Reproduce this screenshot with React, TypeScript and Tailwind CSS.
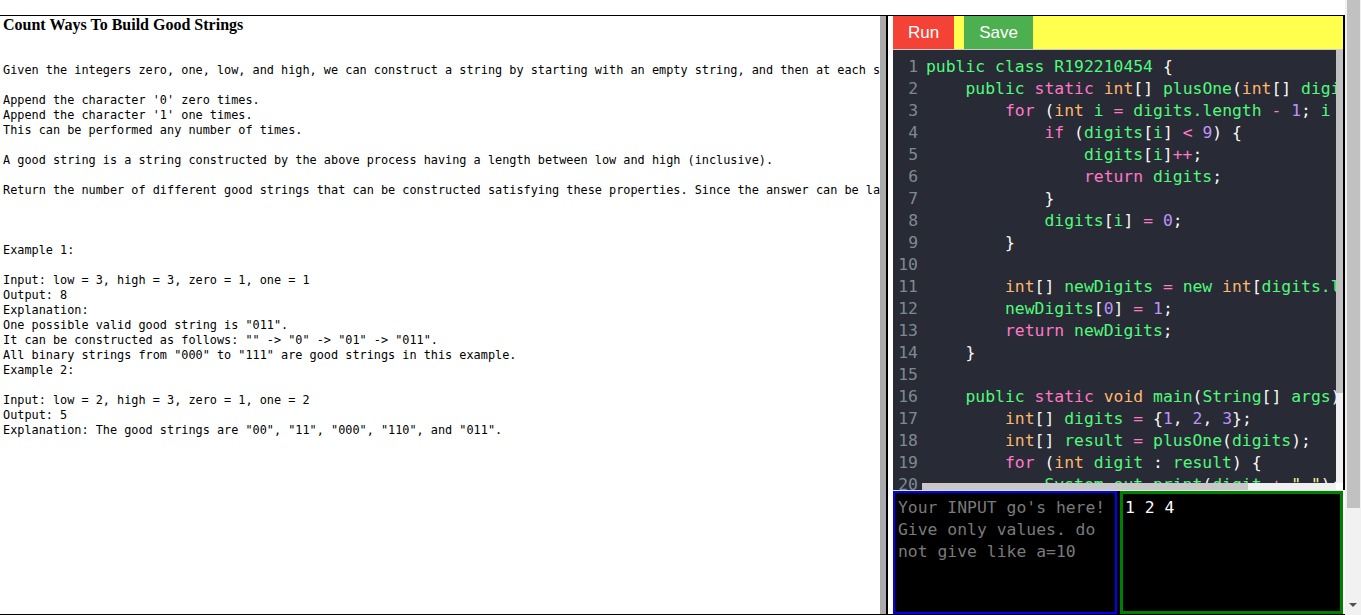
const problemText = `Given the integers zero, one, low, and high, we can construct a string by starting with an empty string, and then at each step perform either of the following:

Append the character '0' zero times.
Append the character '1' one times.
This can be performed any number of times.

A good string is a string constructed by the above process having a length between low and high (inclusive).

Return the number of different good strings that can be constructed satisfying these properties. Since the answer can be large, return it modulo 10^9 + 7.



Example 1:

Input: low = 3, high = 3, zero = 1, one = 1
Output: 8
Explanation: 
One possible valid good string is "011". 
It can be constructed as follows: "" -> "0" -> "01" -> "011". 
All binary strings from "000" to "111" are good strings in this example.
Example 2:

Input: low = 2, high = 3, zero = 1, one = 2
Output: 5
Explanation: The good strings are "00", "11", "000", "110", and "011".`;

const codeLines = [
  'public class R192210454 {',
  '    public static int[] plusOne(int[] digits) {',
  '        for (int i = digits.length - 1; i >= 0; i--) {',
  '            if (digits[i] < 9) {',
  '                digits[i]++;',
  '                return digits;',
  '            }',
  '            digits[i] = 0;',
  '        }',
  '',
  '        int[] newDigits = new int[digits.length + 1];',
  '        newDigits[0] = 1;',
  '        return newDigits;',
  '    }',
  '',
  '    public static void main(String[] args) {',
  '        int[] digits = {1, 2, 3};',
  '        int[] result = plusOne(digits);',
  '        for (int digit : result) {',
  '            System.out.print(digit + " ");',
];

const pink = new Set(['static', 'for', 'if', 'return']);
const orange = new Set(['int', 'void']);

function colorOf(tok: string) {
  if (/^\s+$/.test(tok)) return '';
  if (tok.startsWith('"')) return 'text-[#f1fa8c]';
  if (/^[A-Za-z_]/.test(tok)) {
    if (pink.has(tok)) return 'text-[#ff79c6]';
    if (orange.has(tok)) return 'text-[#ffb86c]';
    return 'text-[#50fa7b]';
  }
  if (/^\d/.test(tok)) return 'text-[#bd93f9]';
  if (/^(\+\+|--|>=|[=<>+\-])$/.test(tok)) return 'text-[#ff79c6]';
  if (tok === '.') return 'text-[#50fa7b]';
  return 'text-[#f8f8f2]';
}

function CodeLine({ text }: { text: string }) {
  const toks = text.match(/(\s+|"[^"]*"|[A-Za-z_]\w*|\d+|\+\+|--|>=|.)/g) || [];
  return (
    <>
      {toks.map((t, i) => (
        <span key={i} className={colorOf(t)}>
          {t}
        </span>
      ))}
    </>
  );
}

function Editor() {
  return (
    <div className="relative h-[440px] overflow-hidden bg-[#282a36] pt-[6px] font-['DejaVu_Sans_Mono',monospace] text-[16.4px]">
      {codeLines.map((line, i) => (
        <div key={i} className="flex h-[22px] leading-[22px] whitespace-pre">
          <span className="w-[29px] shrink-0 pr-[4px] text-right text-[#7d8b8f]">{i + 1}</span>
          <span className="pl-[4px]">
            <CodeLine text={line} />
          </span>
        </div>
      ))}
      {/* scrollbars */}
      <div className="absolute top-0 right-0 bottom-[7px] w-[7px] bg-[#f0f0f0]">
        <div className="h-[343px] bg-[#c1c1c1]" />
      </div>
      <div className="absolute left-[29px] right-[7px] bottom-0 h-[7px] bg-[#f0f0f0]">
        <div className="h-full w-[326px] bg-[#c8c8c8]" />
      </div>
      <div className="absolute right-0 bottom-0 h-[7px] w-[7px] bg-white" />
    </div>
  );
}

export default function App() {
  return (
    <div className="flex h-[615px] w-[1361px] overflow-hidden bg-white">
      <div className="flex w-[1345px] flex-col">
        <div className="h-[15px] shrink-0" />
        <div className="flex min-h-0 flex-1 border-t border-b border-black">
          <div className="w-[880px] shrink-0 overflow-hidden pl-[3px] text-black">
            <div className="font-['Liberation_Serif',serif] text-[16px] leading-[18px] font-bold">
              Count Ways To Build Good Strings
            </div>
            <pre className="mt-[29px] font-['DejaVu_Sans_Mono',monospace] text-[11.85px] leading-[15px] whitespace-pre">
              {problemText}
            </pre>
          </div>
          <div className="w-[6px] shrink-0 bg-[#aaaaaa]" />
          <div className="flex min-w-0 flex-1 flex-col border-l-2 border-black pl-[5px]">
            <div className="flex flex-col border-r-2 border-black">
              <div className="flex h-[34px] gap-[10px] border-b border-[#cccccc] bg-[#ffff4d] font-['Liberation_Sans',Arial,sans-serif] text-[17px] text-white">
                <button className="flex w-[61px] items-center justify-center bg-[#f44336]">Run</button>
                <button className="flex w-[69px] items-center justify-center bg-[#4caf50]">Save</button>
              </div>
              <Editor />
            </div>
            <div className="h-[1px] w-[450px] shrink-0 bg-[#e4e4e4]" />
            <div className="flex min-h-0 w-[450px] flex-1 gap-[3px] bg-black font-['DejaVu_Sans_Mono',monospace] text-[16.4px] leading-[22px]">
              <div className="w-[224px] border-2 border-[#0000ff] px-[3px] pt-[4px] text-[#7a7a7a]">
                Your INPUT go's here! Give only values. do not give like a=10
              </div>
              <div className="flex-1 border-[3px] border-[#008000] px-[2px] pt-[3px] text-white">1 2 4</div>
            </div>
          </div>
        </div>
      </div>
      <div className="flex w-[16px] flex-col bg-[#f1f1f1]">
        <div className="ml-[2px] h-[508px] w-[13px] bg-[#c1c1c1]" />
        <div className="flex flex-1 items-end justify-center pb-[8px]">
          <div className="h-0 w-0 border-x-[4px] border-t-[4px] border-x-transparent border-t-[#505050]" />
        </div>
      </div>
    </div>
  );
}
